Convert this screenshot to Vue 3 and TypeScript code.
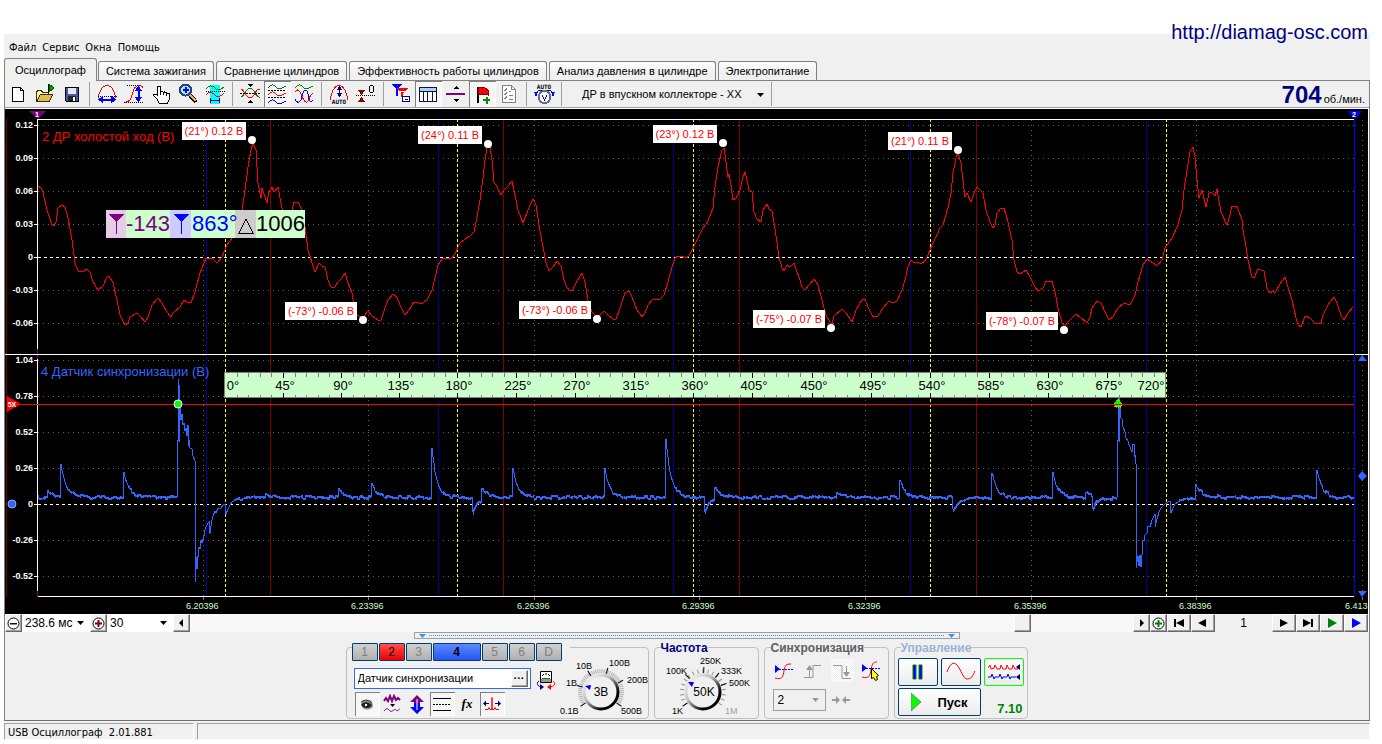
<script setup lang="ts">
interface Shape { d: string; s?: string; f?: string; w?: number; dash?: string }
interface Tool { label: string; pressed?: boolean; shapes: Shape[]; auto?: number }

const R = '#ff0000', G = '#008000', B = '#0000ff', K = '#000000', N = '#000080', P = '#800080'

const toolGroups: Tool[][] = [
  [
    { label: 'Новый', shapes: [{ d: 'M4.5 4.5h8l3 3v11h-11z', s: K, f: '#fff', w: 1 }, { d: 'M12.5 4.5v3h3', s: K }] },
    { label: 'Открыть', shapes: [
      { d: 'M1.5 18.5v-10l2-1h3l1 2h6v3', s: '#403000', f: '#fff4b0' },
      { d: 'M1.5 18.5l4-7h12l-3 7z', s: '#403000', f: '#dcbc50' },
      { d: 'M13.5 1v9', s: K }, { d: 'M14 1l5 4-5 4z', f: '#00a000', s: '#006000' }] },
    { label: 'Сохранить', shapes: [
      { d: 'M3.5 4.5h13v14h-12l-1-1z', s: K, f: '#4a5a9c' }, { d: 'M6 5h8v6h-8z', f: '#dfe8f4' },
      { d: 'M6 13h8v5h-8z', f: '#222' }, { d: 'M11 14h2v4h-2z', f: '#fff' }] },
  ],
  [
    { label: 'Период', shapes: [
      { d: 'M1.5 15c0-6 4-12.5 8.5-12.5s8.5 6.5 8.5 12.5', s: R },
      { d: 'M1 13.5h19', s: K, dash: '1 1' },
      { d: 'M3 16.5h14', s: B, w: 2 }, { d: 'M6 12.5v8l-5-4zM14 12.5v8l5-4z', f: B }] },
    { label: 'Амплитуда', shapes: [
      { d: 'M0.5 19.5c6-1 7-4 8-9s4-8 7-8 3 2 4 3', s: R },
      { d: 'M3 2.5h14M0 19.5h20', s: K, dash: '1 1' },
      { d: 'M14.5 6v10', s: B, w: 2 }, { d: 'M10.5 8h8l-4-5zM10.5 14h8l-4 5z', f: B }] },
    { label: 'Перемещение', shapes: [
      { d: 'M6.5 12.5v-8c0-2 3-2 3 0v5c1-1 3-1 3 0 1-1 3-.5 3 1 1-1 3 0 3 1v4l-2 5h-8l-3-5-3-3c0-2 2-2 4 0z', s: K, f: '#fff' },
      { d: 'M9.5 9v3M12.5 9v3M15.5 10v3', s: K }] },
    { label: 'Масштаб', shapes: [
      { d: 'M11 11l7 8', s: K, w: 4 }, { d: 'M12 12l6 6', s: '#e0b050', w: 2 },
      { d: 'M7.5 1.5a5.5 5.5 0 1 1 0 11a5.5 5.5 0 1 1 0-11', s: '#23427a', f: '#b6e2ff', w: 2 },
      { d: 'M4.5 7h6M7.5 4v6', s: B, w: 2 }] },
    { label: 'Окно измерений', shapes: [
      { d: 'M5 2h10v19h-10z', f: '#00ffff' },
      { d: 'M1 6c3-4 6-4 9-1s5 2 9-1', s: G }, { d: 'M1 8.5h19', s: K, dash: '1 1' },
      { d: 'M1 12c3-4 6-3 9 0s5 2 9-2', s: R }, { d: 'M5.5 15v5M14.5 15v5M6 17.5h8', s: N }] },
  ],
  [
    { label: 'Наложение', shapes: [
      { d: 'M0.5 14c4 0 5-9 9.5-9s5 9 9.5 9', s: G }, { d: 'M0.5 6c4 0 5 9 9.5 9s5-9 9.5-9', s: R },
      { d: 'M0 10.5h21', s: K, dash: '2 1' }, { d: 'M7 1h6l-3 3zM7 20h6l-3-3z', f: K }] },
    { label: 'Раздельно', pressed: true, shapes: [
      { d: 'M1 5c3-4 5-4 8-1s5 2 10-1', s: G }, { d: 'M1 12c3-4 5-4 8-1s5 2 10-1', s: R },
      { d: 'M1 20c3-4 5-4 8-1s5 2 10-1', s: B }, { d: 'M1 7.5h18M1 14.5h18', s: K, dash: '2 1' }] },
    { label: 'Совмещено', shapes: [
      { d: 'M1 5c3-4 5-4 8-1s5 2 10-1', s: G },
      { d: 'M1 9c2-3 4-3 6 2s4 9 6 8 3-9 6-8', s: R },
      { d: 'M1 16c3 6 6 3 7-3s5-8 6-2 2 10 5 6', s: B }] },
  ],
  [
    { label: 'Авто амплитуда', auto: 21, shapes: [
      { d: 'M1.5 17c0-7 4-14.5 8.5-14.5s8.5 7.5 8.5 14.5', s: R },
      { d: 'M10.5 4v8', s: N }, { d: 'M7.5 7h6l-3-4zM7.5 10h6l-3 4z', f: N }] },
    { label: 'Ноль', shapes: [
      { d: 'M0 12.5h20', s: K, dash: '1 1' }, { d: 'M2 7h7l-3.5 5zM2 19h7l-3.5-5z', f: '#800000' },
      { d: 'M14.5 2.5h2l1 1v5l-1 1h-2l-1-1v-5z', s: K }] },
  ],
  [
    { label: 'Фильтр', shapes: [
      { d: 'M1 1h10l-4 5v7h-2v-7z', f: B }, { d: 'M5 5h12l-5 5v4h-2v-4z', f: R },
      { d: 'M8 9l8-1', s: '#fff' }, { d: 'M11.5 13.5h7v5h-7z', s: N, f: '#fff' }, { d: 'M14 16.5h3', s: N }] },
    { label: 'Таблица', pressed: true, shapes: [
      { d: 'M1.5 4.5h17v14h-17z', s: '#101030', f: '#fff' }, { d: 'M2 5h16v3h-16z', f: '#9fd4ff' },
      { d: 'M1 8.5h18M5.5 8v10M9.5 8v10M14.5 8v10', s: '#101030' }] },
    { label: 'Разделитель', shapes: [
      { d: 'M1 11h19', s: P, w: 2 }, { d: 'M8 6h6l-3-3zM8 16h6l-3 3z', f: K }] },
    { label: 'Добавить метку', pressed: true, shapes: [
      { d: 'M5.5 4v16', s: K, w: 2 }, { d: 'M6 5l4-1 3 1 3 2v5l-3-1-3 1-4-1z', f: R, s: '#900000' },
      { d: 'M9 9l2 2', s: P }, { d: 'M11 17h7M14.5 14v7', s: '#009000', w: 2 }] },
    { label: 'Отчёт', shapes: [
      { d: 'M3.5 2.5h9l4 4v13h-13z', s: '#808080', f: '#fff' }, { d: 'M12.5 2.5v4h4', s: '#808080' },
      { d: 'M5 7l1 1 2-3M5 11l1 1 2-3M5 15l1 1 2-3M10 8h2M10 12h4M10 16h4', s: '#808080' }] },
  ],
  [
    { label: 'Автонастройка', auto: 6, shapes: [
      { d: 'M10.5 8a6 6 0 1 1 0 12a6 6 0 1 1 0-12', s: '#607080', f: '#fff', w: 2 },
      { d: 'M8 12l2.5 5 2.5-5', s: B }, { d: 'M2 11c1-3 3-4 6-4M19 11c-1-3-3-4-6-4', s: B },
      { d: 'M0 9h4l-2 5zM21 9h-4l2 5z', f: B }] },
  ],
]

const tabs = ['Осциллограф', 'Система зажигания', 'Сравнение цилиндров', 'Эффективность работы цилиндров', 'Анализ давления в цилиндре', 'Электропитание']

const upperTicks = [['0.12', 125], ['0.09', 158], ['0.06', 191], ['0.03', 224], ['0', 257], ['-0.03', 290], ['-0.06', 323]] as [string, number][]
const lowerTicks = [['1.04', 360], ['0.78', 396], ['0.52', 432], ['0.26', 468], ['0', 504], ['-0.26', 540], ['-0.52', 576]] as [string, number][]
const yTicks = [...upperTicks, ...lowerTicks]
const xTicks = [['6.20396', 203], ['6.23396', 368], ['6.26396', 534], ['6.29396', 699], ['6.32396', 865], ['6.35396', 1031], ['6.38396', 1196], ['6.413', 1362]] as [string, number][]
const blueLines = [206, 438, 673, 910, 1146]
const redLines = [270, 503, 739, 976]
const strokeLines = [225, 457, 693, 930, 1166]

const callouts = [
  { t: '(21°) 0.12 В', x: 182, y: 122, w: 64 }, { t: '(24°) 0.11 В', x: 418, y: 126, w: 64 },
  { t: '(23°) 0.12 В', x: 653, y: 125, w: 64 }, { t: '(21°) 0.11 В', x: 888, y: 132, w: 64 },
  { t: '(-73°) -0.06 В', x: 285, y: 302, w: 72 }, { t: '(-73°) -0.06 В', x: 519, y: 301, w: 72 },
  { t: '(-75°) -0.07 В', x: 753, y: 310, w: 72 }, { t: '(-78°) -0.07 В', x: 986, y: 312, w: 72 },
]

const degreeX = (deg: number): number => {
  const i = Math.min(3, Math.floor(deg / 180))
  return Math.round(strokeLines[i] + ((strokeLines[i + 1] - strokeLines[i]) * (deg - i * 180)) / 180)
}
const rulerTicks = Array.from({ length: 79 }, (_, i) => (i + 1) * 9).map(d => ({ x: degreeX(d), major: d % 45 === 0 }))
const rulerLabels = Array.from({ length: 17 }, (_, i) => i * 45).map(d => ({
  t: d + '°', x: d === 0 ? 233 : d === 720 ? 1151 : degreeX(d) + 2,
}))

const pressure = `38,186 41,188 43,192 47,210 52,225 54,226 56,222 58,208 62,205 65,207 68,218 72,240 75,263 78,271 83,272 87,269 90,272 93,282 98,290 103,286 107,277 109,276 113,283 117,300 120,315 125,325 128,323 130,317 137,313 140,316 145,322 148,317 152,305 158,298 162,303 167,312 171,317 173,313 180,307 184,300 187,302 191,303 195,292 200,273 206,258 213,259 217,263 222,257 227,245 232,238 242,210 245,190 248,167 251,150 253,143 256,150 258,183 261,198 262,188 265,197 267,203 269,192 272,187 274,192 278,187 281,203 283,213 288,217 292,210 294,202 298,202 302,210 305,227 308,250 315,272 319,263 322,266 325,267 328,280 331,287 335,287 338,282 342,278 345,273
348,283 352,293 354,305 357,315 363,318 365,315 368,311 372,316 375,318 378,320 381,320 385,308 388,300 393,294 397,297 400,305 405,315 409,310 414,302 419,303 423,303 427,300 432,290 435,278 438,265 442,259 447,258 451,259 455,254 460,243 465,239 470,236 474,232 477,217 480,200 483,178 485,160 487,148 490,147 492,160 494,182 497,187 501,195 504,190 508,186 512,181 514,190 518,210 523,223 527,213 530,205 533,199 536,205 539,225 543,247 546,263 549,271 553,267 557,261 561,266 564,280 567,288 572,291 576,283 582,273 585,282 588,300 592,312 597,317 600,315 604,311 608,315 613,319 616,319 620,308 625,293 629,291 632,297 637,310 642,317 645,313 648,305 653,299 660,299 664,295 668,282 672,267 675,258 678,256 682,256 686,258 689,256
693,248 697,240 703,228 708,221 713,208 715,187 718,167 722,150 724,148 726,162 728,177 729,174 731,185 733,200 736,198 740,190 743,177 745,172 747,180 749,190 752,192 754,212 757,219 761,222 763,210 767,204 769,209 772,211 774,223 777,242 779,257 782,268 784,271 787,265 790,267 794,263 797,272 799,277 802,287 805,290 809,285 814,279 818,285 822,300 826,315 832,325 834,316 842,309 846,313 852,322 856,310 862,300 865,299 868,307 873,317 878,316 883,308 889,301 893,303 897,301 902,290 905,280 908,267 911,260 913,262 917,262 921,264 925,261 928,255 932,245 937,235 940,228 943,225 948,208 951,193 953,173 956,158 958,153 961,163 963,180 965,197 967,193 971,202 974,193 977,187 983,193 986,210 990,222 993,228 995,225 997,213 1001,208 1004,208 1008,222 1012,240 1014,260 1017,272 1020,274 1026,270 1030,277
1035,287 1038,291 1043,288 1046,281 1052,281 1055,292 1058,308 1062,323 1064,327 1068,322 1076,314 1080,317 1087,323 1090,317 1092,308 1097,301 1101,303 1105,312 1109,320 1113,317 1118,308 1124,303 1130,305 1135,295 1138,282 1143,265 1147,259 1153,263 1157,266 1162,260 1165,248 1172,238 1178,225 1182,210 1184,190 1187,170 1190,152 1193,147 1195,157 1197,180 1199,198 1202,190 1206,207 1209,193 1211,192 1215,196 1217,189 1221,212 1227,225 1230,215 1232,206 1237,206 1242,220 1243,230 1246,247 1248,260 1252,277 1254,278 1258,269 1264,271 1267,288 1270,293 1273,291 1275,293 1280,284 1285,277 1288,287 1292,300 1296,318 1298,325 1301,327 1305,316 1310,318 1315,323 1321,324 1323,315 1327,307 1330,302 1334,297 1337,303 1341,315 1344,320 1348,313 1353,307`

/* Sync sensor: quiet baseline with decaying pulses, plus two large reference pulses. */
const pulses: [number, number][] = [[48, -7], [61, -33], [124, -25], [266, -4], [339, -7], [372, -12], [432, -47], [473, 16], [482, -12], [513, -29], [605, -27], [666, -57], [705, 15], [715, -12], [837, -4], [900, -16], [953, 14], [992, -25], [1053, -24], [1086, -5], [1093, 13], [1196, -14], [1317, -28]]
const firstPulse = '177,497 177,440 178,440 178,379 179,385 179,442 180,408 181,420 182,414 183,425 184,423 185,431 186,428 187,436 187,425 188,425 188,446 189,440 190,448 192,449 193,456 195,461 195,582 196,557 196,568 197,568 197,556 198,557 199,547 200,549 201,540 202,543 204,536 205,530 206,527 208,523 209,522 209,534 210,533 212,520 213,516 215,511 216,513 218,508 221,508 223,505 225,504 226,514 228,509 230,505 232,502 234,501'
const secondPulse = '1117,497 1117,440 1118,440 1118,380 1119,385 1119,442 1120,405 1120,417 1122,419 1123,427 1125,432 1126,438 1128,441 1129,445 1132,452 1133,444 1134,444 1134,457 1135,455 1136,464 1136,568 1138,556 1139,566 1140,555 1141,567 1142,555 1142,540 1144,541 1145,535 1147,533 1148,526 1150,527 1152,520 1155,514 1155,527 1157,519 1159,512 1161,508 1163,506 1165,504 1170,501 1171,513 1173,508 1175,504 1178,502'
const noise = (x: number): number => {
  const v = Math.sin(x * 12.9898) * 43758.5453
  return v - Math.floor(v)
}
function quiet(from: number, to: number): string {
  const out: string[] = []
  for (let x = from; x <= to; x++) {
    let y = 497
    if (x > 234 && x < 260) y += 4 * Math.exp(-(x - 234) / 9)
    if (x > 1178 && x < 1200) y += 5 * Math.exp(-(x - 1178) / 9)
    for (const [px, amp] of pulses) if (x >= px && x < px + 40) y += amp * Math.exp(-(x - px) / 5)
    const swell = noise(Math.floor(x / 3)) * 3 - 1.5
    out.push(`${x},${Math.round(y + swell - noise(x + 7))}`, `${x},${Math.round(y + swell + 1 + noise(x))}`)
  }
  return out.join(' ')
}
const sync = [quiet(38, 176), firstPulse, quiet(235, 1116), secondPulse, quiet(1179, 1353)].join(' ')

const dialTicks = (n: number): { a: number }[] => Array.from({ length: n }, (_, i) => ({ a: -125 + (250 * i) / (n - 1) }))
const fineTicks = dialTicks(46)
const coarseTicks = dialTicks(19)
const voltLabels = [['0.1В', 0, 84], ['1В', 6, 56], ['10В', 16, 39], ['100В', 49, 36], ['200В', 67, 53], ['500В', 61, 84]] as [string, number, number][]
const freqLabels = [['1K', 13, 84], ['100K', 7, 44], ['250K', 41, 34], ['333K', 62, 44], ['500K', 70, 56]] as [string, number, number][]
const channels = ['1', '2', '3', '4', '5', '6', 'D']
const nextButtons = [
  { label: 'Вперёд', d: 'M8 5l8 4-8 4z', c: K },
  { label: 'В конец', d: 'M7 5l8 4-8 4zM15 5h2v8h-2z', c: K },
  { label: 'Воспроизвести', d: 'M8 4l9 5-9 5z', c: G },
  { label: 'Быстро', d: 'M8 4l9 5-9 5z', c: B },
]
</script>

<template>
  <div class="page">
    <a class="site" href="http://diamag-osc.com">http://diamag-osc.com</a>
    <div class="window">
      <nav class="menu">
        <button v-for="m in ['Файл', 'Сервис', 'Окна', 'Помощь']" :key="m">{{ m }}</button>
      </nav>
      <div class="tabs" role="tablist">
        <button v-for="(t, i) in tabs" :key="t" role="tab" :aria-selected="i === 0" :class="{ active: i === 0 }">{{ t }}</button>
      </div>
      <main class="main">
        <div class="toolbar">
          <template v-for="(g, gi) in toolGroups" :key="gi">
            <button v-for="t in g" :key="t.label" class="tool" :class="{ pressed: t.pressed }" :aria-label="t.label">
              <svg width="21" height="22" viewBox="0 0 21 22">
                <path v-for="(p, i) in t.shapes" :key="i" :d="p.d" :stroke="p.s || 'none'" :fill="p.f || 'none'" :stroke-width="p.w || 1" :stroke-dasharray="p.dash" />
                <text v-if="t.auto" x="10" :y="t.auto" class="auto" text-anchor="middle">AUTO</text>
              </svg>
            </button>
            <span class="sep"></span>
          </template>
          <span class="preset">
            <select aria-label="Режим"><option>ДР в впускном коллекторе - XX</option></select>
            <svg width="7" height="4" viewBox="0 0 7 4"><path d="M0 0h7l-3.5 4z" /></svg>
          </span>
          <span class="sep"></span>
          <span class="rpm"><b>704</b><span>об./мин.</span></span>
        </div>

        <svg class="scope" viewBox="5 109 1363 505">
          <rect x="5" y="109" width="1363" height="505" fill="#000" />
          <g class="crisp">
            <template v-for="[t, y] in yTicks" :key="t + y">
              <rect x="34" :y="y" width="4" height="1" fill="#fff" />
              <path :d="`M38 ${y}.5H1354`" :class="t === '0' ? 'zero' : 'grid'" />
            </template>
            <path v-for="[t, x] in xTicks" :key="t" :d="`M${x}.5 120V596`" class="grid" />
            <rect v-for="[t, x] in xTicks" :key="t" :x="x" y="597" width="1" height="3" fill="#808080" />
            <rect v-for="x in blueLines" :key="x" :x="x" y="120" width="1" height="476" fill="#000090" />
            <rect v-for="x in redLines" :key="x" :x="x" y="120" width="1" height="476" fill="#800000" />
            <path v-for="x in strokeLines" :key="x" :d="`M${x}.5 119V596`" stroke="#ffff00" stroke-dasharray="3 2" />
            <rect x="6" y="119" width="1" height="478" fill="#800000" />
            <rect x="37" y="119" width="1" height="478" fill="#fff" />
            <rect x="37" y="349" width="1" height="10" fill="#800080" />
            <rect x="37" y="591" width="1" height="6" fill="#800080" />
            <rect x="38" y="119" width="1316" height="1" fill="#fff" />
            <rect x="5" y="354" width="1363" height="1" fill="#fff" />
            <rect x="38" y="596" width="1316" height="1" fill="#fff" />
            <polyline :points="pressure" fill="none" stroke="#ff0000" />
            <polyline :points="sync" fill="none" stroke="#3366ff" />
            <rect x="1354" y="117" width="1" height="480" fill="#0000ff" />
            <rect x="6" y="404" width="1348" height="1" fill="#ff0000" />
          </g>
          <g class="axis">
            <text v-for="[t, y] in yTicks" :key="t + y" x="33" :y="y + 3" text-anchor="end">{{ t }}</text>
          </g>
          <g class="time">
            <text v-for="[t, x] in xTicks" :key="t" :x="x - 17" y="609">{{ t }}</text>
          </g>
          <text x="42" y="141" class="title" fill="#ff0000">2 ДР холостой ход (В)</text>
          <text x="41" y="376" class="title" fill="#3366ff">4 Датчик синхронизации (В)</text>

          <path d="M29 111h17l-8 8z" fill="#800080" />
          <text x="37" y="117" class="tag" text-anchor="middle">1</text>
          <path d="M1347 111h15l-7 8z" fill="#0000ff" />
          <text x="1354" y="117" class="tag" text-anchor="middle">2</text>
          <path d="M7 396l14 8-14 8z" fill="#ff0000" />
          <text x="12" y="407" class="tag" text-anchor="middle">5X</text>
          <circle cx="12" cy="504" r="4" fill="#3366ff" stroke="#8aa8ff" />
          <path d="M1358 361l4-6 5 6zM1358 591h9l-5 6zM1362 471l5 5-5 5-4-5z" fill="#3366ff" />

          <g class="ruler">
            <rect x="224" y="372" width="942" height="26" fill="#ccffcc" />
            <path d="M224 372h942v1h-942zM224 397h942v1h-942zM224 372h1v26h-1zM1165 372h1v26h-1z" fill="#808080" />
            <template v-for="t in rulerTicks" :key="t.x">
              <rect :x="t.x" y="373" width="1" :height="t.major ? 5 : 4" :fill="t.major ? '#000' : '#808080'" />
              <rect :x="t.x" :y="t.major ? 393 : 395" width="1" :height="t.major ? 5 : 2" :fill="t.major ? '#000' : '#808080'" />
            </template>
            <text v-for="l in rulerLabels" :key="l.t" :x="l.x" y="390" text-anchor="middle">{{ l.t }}</text>
          </g>
          <circle cx="178" cy="404" r="4" fill="#00ff00" stroke="#fff" />
          <path d="M1114 404l4-5 4 5-1 3h-6z" fill="#00ff00" stroke="#ffff00" stroke-dasharray="1 1" />
          <rect x="1113" y="404" width="10" height="1" fill="#ff0000" />

          <template v-for="c in callouts" :key="c.x">
            <rect :x="c.x" :y="c.y" :width="c.w" height="18" fill="#fff" />
            <text :x="c.x + c.w / 2" :y="c.y + 13" class="callout" text-anchor="middle">{{ c.t }}</text>
            <circle :cx="c.x + c.w + 6" :cy="c.y + 18" r="4" fill="#fff" />
          </template>

          <g class="meter">
            <path d="M106 210h199v28h-199z" fill="#ccffcc" />
            <path d="M106 210h20v28h-20z" fill="#e6cce6" />
            <path d="M170 210h21v28h-21z" fill="#ccccff" />
            <path d="M235 210h21v28h-21z" fill="#cccccc" />
            <path d="M109 214h15l-7 8v12h-1v-12z" fill="#800080" />
            <path d="M174 214h15l-7 8v12h-1v-12z" fill="#0000ff" />
            <path d="M239 233l7-14 7 14z" fill="none" stroke="#000" />
            <text x="126" y="231" fill="#800080">-143</text>
            <text x="192" y="231" fill="#0000ff">863°</text>
            <text x="256" y="231" fill="#000">1006</text>
          </g>
        </svg>

        <div class="navrow">
          <button class="raised sq" aria-label="Уменьшить развёртку">
            <svg width="15" height="15" viewBox="0 0 15 15"><circle cx="7.5" cy="7.5" r="5.5" /><path d="M4 7h7v1.500h-7z" :fill="N" /></svg>
          </button>
          <span class="pick sweep"><select aria-label="Развёртка"><option>238.6 мс</option></select><svg width="7" height="4" viewBox="0 0 7 4"><path d="M0 0h7l-3.5 4z" /></svg></span>
          <button class="raised sq" aria-label="Увеличить развёртку">
            <svg width="15" height="15" viewBox="0 0 15 15"><circle cx="7.5" cy="7.5" r="5.5" /><path d="M4 6.5h2.5v-2.500h2v2.500h2.500v2h-2.500v2.500h-2v-2.500h-2.500z" fill="#800000" /></svg>
          </button>
          <span class="pick count"><select aria-label="Количество"><option>30</option></select><svg width="7" height="4" viewBox="0 0 7 4"><path d="M0 0h7l-3.5 4z" /></svg></span>
          <button class="raised sq" aria-label="Прокрутить влево"><svg width="15" height="16" viewBox="0 0 15 16"><path d="M5 8l4-4v8z" /></svg></button>
          <div class="track"><span class="thumb raised"></span></div>
          <button class="raised sq" aria-label="Прокрутить вправо"><svg width="15" height="16" viewBox="0 0 15 16"><path d="M10 8l-4-4v8z" /></svg></button>
          <button class="raised sq" aria-label="Добавить">
            <svg width="15" height="15" viewBox="0 0 15 15"><circle cx="7.5" cy="7.5" r="5.5" /><path d="M4 6.500h2.500v-2.500h2v2.500h2.500v2h-2.500v2.500h-2v-2.500h-2.500z" :fill="G" /></svg>
          </button>
          <button class="raised wide" aria-label="В начало"><svg width="20" height="18" viewBox="0 0 20 18"><path d="M5 5h2v8h-2zM7 9l8-4v8z" /></svg></button>
          <button class="raised wide" aria-label="Назад"><svg width="20" height="18" viewBox="0 0 20 18"><path d="M5 9l8-4v8z" /></svg></button>
          <output class="frame">1</output>
          <button v-for="b in nextButtons" :key="b.label" class="raised wide" :aria-label="b.label">
            <svg width="20" height="18" viewBox="2 0 20 18"><path :d="b.d" :fill="b.c" /></svg>
          </button>
        </div>

        <div class="splitter">
          <svg width="7" height="4" viewBox="0 0 7 4"><path d="M0 0h7l-3.5 4z" fill="#3399ff" /></svg>
          <i></i>
          <svg width="7" height="4" viewBox="0 0 7 4"><path d="M0 0h7l-3.5 4z" fill="#3399ff" /></svg>
        </div>

        <div class="panels">
          <section class="group channel">
            <div class="setup">
              <div class="chans">
                <button v-for="c in channels" :key="c" :class="'c' + c">{{ c }}</button>
              </div>
              <div class="namerow">
                <span class="namebox">
                  <input value="Датчик синхронизации" aria-label="Название канала" />
                  <button class="raised" aria-label="Выбрать датчик">···</button>
                </span>
                <button class="flat" aria-label="Калибровка">
                  <svg width="20" height="20" viewBox="0 0 20 20">
                    <path d="M4.5 1.5h11v11h-11z" stroke="#000" fill="#fff" /><path d="M5 9h10v3h-10z" fill="#999" /><path d="M6 8.5h8" stroke="#008000" /><path d="M6 6l2-2M10 5V3M14 6l-2-2" stroke="#000" fill="none" />
                    <path d="M3 11c-3 2-2 6 4 6" stroke="#000080" fill="none" /><path d="M4 14v6l4-3z" fill="#000080" />
                    <path d="M17 11c3 2 2 6-4 6" stroke="#ff0000" fill="none" /><path d="M15 14v6l-4-3z" fill="#ff0000" />
                  </svg>
                </button>
              </div>
              <div class="toggles">
                <button class="pressed" aria-label="Видимость"><svg width="20" height="20" viewBox="0 0 20 20"><path d="M4 8c3-3 9-3 11 0l1 4c-1 4-8 5-11 1z" fill="#8a9088" /><path d="M4 11c3-4 8-3 11 0-2 4-8 4-11 0z" fill="#222" /><path d="M4 8c4-3 8-2 11 1" stroke="#333" fill="none" /><path d="M8 10h2v2h-2z" fill="#fff" /></svg></button>
                <button aria-label="Сглаживание"><svg width="20" height="20" viewBox="0 0 20 20"><path d="M2 7l2-3 2 3 2-5 2 5 2-5 2 4 2-2 2 2" stroke="#800080" stroke-width="2" fill="none" /><path d="M2 17c3-4 4-2 6 0s4-3 6-1 3-1 4-1" stroke="#800080" fill="none" /><path d="M8 10h5l-2.5 3z" /></svg></button>
                <button aria-label="Сдвиг"><svg width="20" height="20" viewBox="0 0 20 20"><path d="M10 1l7 7h-4v3h-6v-3h-4z" fill="#800080" /><path d="M10 20l7-7h-4v-4h-6v4h-4z" fill="#0000ff" /><path d="M10 5v11" stroke="#fff" /></svg></button>
                <button class="pressed" aria-label="Линии"><svg width="20" height="20" viewBox="0 0 20 20"><path d="M1 4.5h18M1 16.5h18" stroke="#000" /><path d="M1 10.5h18" stroke="#000" stroke-dasharray="2 1" /></svg></button>
                <button aria-label="Функция"><i class="fx">fx</i></button>
                <button class="pressed" aria-label="Импульс"><svg width="20" height="20" viewBox="0 0 20 20"><path d="M3 15.5h3l1-2 1 2h2v-12v12h2l1-2 1 2h3" stroke="#ff0000" fill="none" /><path d="M2 9.5h5M13 9.5h5" stroke="#000080" /><path d="M1 9.5l3-3v6zM19 9.5l-3-3v6z" fill="#000080" /></svg></button>
              </div>
            </div>
            <svg class="dial" width="90" height="90" viewBox="0 0 90 90">
              <defs><linearGradient id="knob" x1="0" y1="0" x2="1" y2="1"><stop offset="0" stop-color="#fff" /><stop offset="0.4" stop-color="#c0c0c0" /><stop offset="0.75" stop-color="#000" /></linearGradient></defs>
              <path v-for="t in fineTicks" :key="t.a" d="M41 43v-4" :transform="`rotate(${t.a} 41 62)`" stroke="#b0b0b0" />
              <path v-for="a in [-125, -75, -32, 16, 62, 125]" :key="a" d="M41 43v-6" :transform="`rotate(${a} 41 62)`" stroke="#000" />
              <circle cx="41" cy="62" r="17" fill="#f0f0f0" stroke="url(#knob)" stroke-width="3" />
              <path d="M25 56l6-1-1 5z" fill="#0000ff" />
              <text x="41" y="66" class="value" text-anchor="middle">3В</text>
              <text v-for="[t, x, y] in voltLabels" :key="t" :x="x" :y="y">{{ t }}</text>
            </svg>
          </section>

          <fieldset class="group freq">
            <legend>Частота</legend>
            <svg class="dial" width="100" height="90" viewBox="0 0 100 90">
              <path v-for="t in coarseTicks" :key="t.a" d="M48 43v-4" :transform="`rotate(${t.a} 48 62)`" stroke="#909090" />
              <path v-for="a in [-125, -45, 2, 40, 70]" :key="a" d="M48 43v-6" :transform="`rotate(${a} 48 62)`" stroke="#000" />
              <circle cx="48" cy="62" r="17" fill="#f0f0f0" stroke="url(#knob)" stroke-width="3" />
              <path d="M33 52h6l-2 5z" fill="#0000ff" />
              <text x="49" y="66" class="value" text-anchor="middle">50K</text>
              <text v-for="[t, x, y] in freqLabels" :key="t" :x="x + 4" :y="y">{{ t }}</text>
              <text x="70" y="84" class="off">1M</text>
            </svg>
          </fieldset>

          <fieldset class="group syncbox">
            <legend>Синхронизация</legend>
            <div class="syncicons">
              <button class="flat" aria-label="Уровень"><svg width="20" height="20" viewBox="0 0 20 20"><path d="M1 17c7 2 8-1 9-7s2-7 7-7" stroke="#ff0000" fill="none" /><path d="M1 4l5 4-5 4z" fill="#0000ff" /><path d="M5 8.5h14" stroke="#0000ff" stroke-dasharray="2 1" /></svg></button>
              <button class="flat" aria-label="Фронт"><svg width="20" height="20" viewBox="0 0 20 20"><path d="M1 16.5h9v-12h8M6.5 7v9" stroke="#999" fill="none" /><path d="M3 9l3.5-5 3.5 5z" fill="#999" /></svg></button>
              <button class="flat on" aria-label="Спад"><svg width="20" height="20" viewBox="0 0 20 20"><path d="M1 4.5h9v13h9M14.5 5v9" stroke="#999" fill="none" /><path d="M11 11h7l-3.500 5z" fill="#999" /></svg></button>
              <button class="flat" aria-label="Выбор уровня"><svg width="20" height="20" viewBox="0 0 20 20"><path d="M1 16c7 2 8-1 9-7s2-8 6-8" stroke="#ff0000" fill="none" /><path d="M1 3l5 4-5 4z" fill="#0000ff" /><path d="M5 7.5h14" stroke="#0000ff" stroke-dasharray="2 1" /><path d="M10.5 7.5v10l2-1 2 3 2-1-1-3 2-1z" fill="#ff0" stroke="#000" /></svg></button>
            </div>
            <div class="syncsel">
              <span><select aria-label="Канал синхронизации"><option>2</option></select><svg width="7" height="4" viewBox="0 0 7 4"><path d="M0 0h7l-3.5 4z" fill="#999" /></svg></span>
              <svg width="18" height="10" viewBox="0 0 18 10"><path d="M0 4h4v-3l4 4-4 4v-3h-4zM18 4h-4v-3l-4 4 4 4v-3h4z" fill="#999" /></svg>
            </div>
          </fieldset>

          <fieldset class="group control">
            <legend>Управление</legend>
            <div class="ctl">
              <button aria-label="Пауза"><svg width="16" height="16" viewBox="0 0 16 16"><path d="M3 1h3v14h-3zM9 1h3v14h-3z" fill="#0000ff" stroke="#008000" /></svg></button>
              <button aria-label="Непрерывно"><svg width="30" height="20" viewBox="0 0 30 20"><path d="M1 10c3-8 6-11 10-7s6 15 11 14 5-5 7-8" stroke="#ff0000" fill="none" /></svg></button>
              <button class="lit" aria-label="Запись"><svg width="32" height="20" viewBox="0 0 32 20"><path d="M0 6l2-3 1 4 3-1 1-3 2 4h3l1-4 2 4h3l1-4 2 4h3l1-4 2 4h3l1-3" stroke="#ff0000" fill="none" /><path d="M0 15h3l1-3 2 5 1-2h4l1-3 2 5 1-2h4l1-3 2 5 1-2h5" stroke="#0000c0" fill="none" /><path d="M32 2v6l-4-3zM32 12v6l-4-3z" fill="#000080" /></svg></button>
              <button class="start"><svg width="10" height="20" viewBox="0 0 10 20"><path d="M0 1l10 9-10 9z" fill="#00ff00" stroke="#808080" /></svg>Пуск</button>
              <output>7.10</output>
            </div>
          </fieldset>
        </div>
      </main>
      <footer class="status"><span>USB Осциллограф&nbsp; 2.01.881</span><span></span></footer>
    </div>
  </div>
</template>

<style>
body { background: #fff; }
</style>

<style scoped>
.page { position: relative; padding: 34px 12px 4px 4px; font: 11px/13px "Liberation Sans", Arial, sans-serif; color: #000; }
.page *, .page *::before { box-sizing: border-box; }
button, select, input { font: inherit; color: inherit; margin: 0; padding: 0; border: 0; background: none; border-radius: 0; appearance: none; }
svg { display: block; flex: none; }
.site { position: absolute; right: 14px; top: 20px; font-size: 20px; line-height: 24px; color: #000080; text-decoration: none; }
.window { background: #f0f0f0; }
.menu { display: flex; gap: 6px; height: 24px; padding: 2px 0 0 5px; font-family: "DejaVu Sans Condensed", "Open Sans", sans-serif; font-size: 11px; }
.tabs { display: flex; align-items: flex-end; height: 22px; gap: 2px; }
.tabs button { height: 19px; padding: 0 7px; border: 1px solid #808080; border-bottom: 0; border-radius: 3px 3px 0 0; background: linear-gradient(#fff, #f0f0f0 60%); white-space: nowrap; }
.tabs .active { height: 23px; margin: 0 -1px -1px 0; padding: 0 10px; background: #f0f0f0; position: relative; z-index: 1; }
.main { border: 1px solid #808080; border-bottom-color: #707070; }
.toolbar { display: flex; align-items: stretch; height: 28px; border-bottom: 1px solid #fff; box-shadow: inset 0 -1px #a0a0a0; }
.tool { width: 27px; height: 26px; display: flex; align-items: center; justify-content: center; }
.tool svg, .crisp, .ruler rect, .ruler path, .meter path { shape-rendering: crispEdges; }
.pressed { background: repeating-conic-gradient(#fff 0 25%, #f0f0f0 0 50%) 0 0 / 2px 2px; box-shadow: inset 1px 1px #808080, inset -1px -1px #fff; }
.auto { font: bold 6px "DejaVu Sans Mono", monospace; }
.sep { width: 8px; flex: none; }
.sep::before { content: ""; display: block; width: 1px; height: 24px; margin: 1px 0 0 3px; background: #a0a0a0; }
.preset { display: flex; align-items: center; gap: 8px; padding: 0 4px 0 16px; }
.preset select { width: 167px; height: 20px; }
.rpm { margin-left: auto; display: flex; align-items: baseline; gap: 2px; padding-right: 4px; line-height: 28px; }
.rpm b { font-size: 24px; color: #000080; }
.scope { width: 100%; height: auto; border-right: 1px solid #fff; box-sizing: border-box; }
.grid { stroke: #606060; stroke-dasharray: 1 4; }
.zero { stroke: #fff; stroke-dasharray: 3 3; }
.axis { font-size: 9px; font-weight: bold; fill: #fff; }
.time { font-size: 9px; fill: #ccffcc; }
.title { font-size: 13px; }
.tag { font-size: 7px; font-weight: bold; fill: #fff; }
.ruler { font-size: 13px; }
.callout { font-size: 11px; fill: #ff0000; }
.meter { font-size: 22px; }
.navrow { display: flex; height: 18px; background: #fff; padding-right: 1px; }
.raised { background: #f0f0f0; border: 1px solid; border-color: #fff #696969 #696969 #fff; box-shadow: inset -1px -1px #a0a0a0; display: flex; align-items: center; justify-content: center; flex: none; overflow: hidden; }
.sq { width: 17px; }
.sq circle { fill: #fff; stroke: #000; }
.wide { width: 24px; }
.pick { display: flex; align-items: center; padding: 0 6px 0 3px; }
.pick select { flex: 1; min-width: 0; font-size: 12px; line-height: 16px; }
.sweep { width: 68px; }
.count { width: 66px; }
.track { flex: 1; display: flex; padding-left: 824px; background: repeating-conic-gradient(#fff 0 25%, #f3f3f3 0 50%) 0 0 / 2px 2px; }
.thumb { width: 17px; }
.frame { width: 57px; text-align: center; font-size: 12px; line-height: 19px; background: #f0f0f0; }
.splitter { width: 546px; height: 7px; margin: 0 auto; border: 1px solid #a0a0a0; display: flex; align-items: center; gap: 3px; padding: 0 4px; }
.splitter i { flex: 1; height: 1px; background: repeating-linear-gradient(90deg, #3399ff 0 1px, transparent 1px 2px); }
.panels { display: flex; justify-content: center; gap: 5px; height: 81px; padding: 5px 1px 0 0; }
.group { position: relative; margin: 3px 0 0; min-width: 0; padding: 0; height: 72px; border: 1px solid #c0c0c0; border-radius: 4px; }
.group legend { position: absolute; left: 6px; top: -7px; font-weight: bold; font-size: 12px; line-height: 14px; padding: 0; background: #f0f0f0; }
.channel { width: 303px; display: flex; }
.setup { margin-top: -5px; padding-left: 5px; width: 213px; flex: none; }
.chans { display: flex; gap: 1px; background: #f0f0f0; width: 218px; }
.chans button { width: 26px; height: 18px; border: 1px solid #003c74; border-radius: 1px; background: linear-gradient(#d0d0d0, #b0b0b0); color: #808080; font-size: 12px; }
.chans .c2 { background: linear-gradient(#ff5050, #ee0000); color: #000; }
.chans .c4 { width: 48px; background: linear-gradient(#5c88ff, #2456f0); color: #000; font-weight: bold; }
.namerow { display: flex; gap: 4px; margin: 7px 0 0 2px; }
.namebox { display: flex; width: 177px; height: 21px; border: 1px solid #3366ff; background: #fff; padding: 1px 2px; }
.namebox input { flex: 1; min-width: 0; padding-left: 1px; }
.namebox button { width: 17px; font-weight: bold; }
.toggles { display: flex; gap: 0; margin: 1px 0 0 3px; }
.toggles button { width: 25px; height: 24px; display: flex; align-items: center; justify-content: center; }
.fx { font: italic bold 13px "Liberation Serif", serif; }
.dial { font-size: 9px; margin-top: -18px; }
.dial .value { font-size: 12px; }
.dial .off { fill: #a0a0a0; }
.freq { width: 105px; }
.freq legend { color: #000080; }
.syncbox { width: 125px; }
.syncbox legend { color: #606060; }
.syncicons { display: flex; gap: 6px; padding: 11px 0 0 8px; }
.syncicons .on { background: repeating-conic-gradient(#fff 0 25%, #f0f0f0 0 50%) 0 0 / 2px 2px; }
.flat { width: 23px; height: 23px; display: flex; align-items: center; justify-content: center; }
.syncsel { display: flex; align-items: center; gap: 6px; padding: 7px 0 0 8px; }
.syncsel span { display: flex; align-items: center; width: 53px; height: 22px; border: 1px solid #a0a0a0; padding: 0 6px 0 4px; }
.syncsel select { flex: 1; font-size: 12px; }
.control { width: 134px; }
.control legend { color: #99b4d1; }
.ctl { display: grid; grid-template-columns: 40px 40px 40px; gap: 2px 3px; padding: 10px 0 0 3px; }
.ctl button { display: flex; align-items: center; justify-content: center; height: 28px; border: 1px solid #003c74; border-radius: 2px; background: linear-gradient(#fff, #ececec); }
.ctl .lit { border-color: #00ff00; }
.ctl .start { grid-column: span 2; font-size: 13px; font-weight: bold; gap: 17px; }
.ctl output { color: #008000; font-weight: bold; font-size: 13px; text-align: right; padding: 14px 1px 0 0; }
.status { display: flex; gap: 3px; height: 19px; padding-top: 2px; font-family: "DejaVu Sans Condensed", "Open Sans", sans-serif; }
.status span { border: 1px solid; border-color: #a0a0a0 #fff #fff #a0a0a0; width: 190px; padding: 2px 3px; white-space: nowrap; }
.status span + span { flex: 1; }
</style>
